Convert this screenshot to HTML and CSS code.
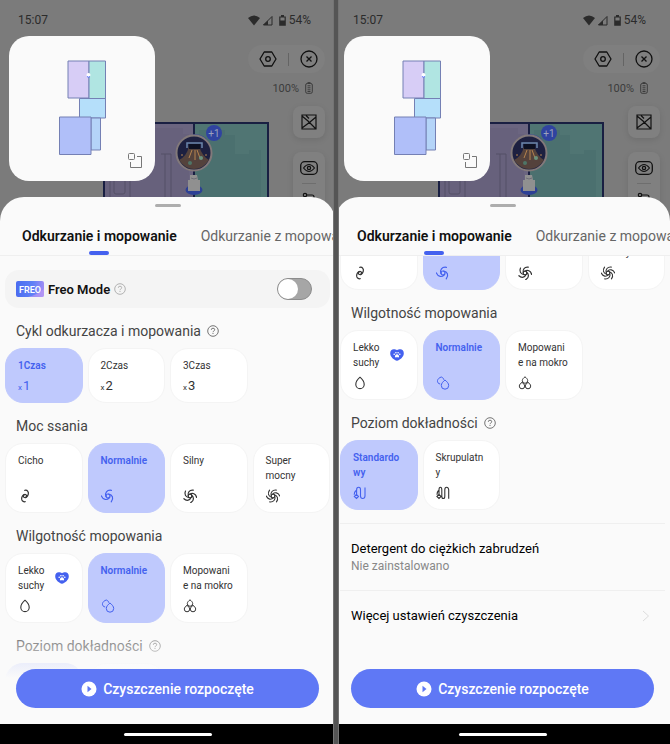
FILE: index.html
```
<!DOCTYPE html>
<html lang="pl">
<head>
<meta charset="UTF-8">
<meta name="viewport" content="width=device-width, initial-scale=1.0">
<title>Freo Mode</title>
<link rel="stylesheet" href="styles.css">
</head>
<body>

<!-- shared icons -->
<svg class="sprite" aria-hidden="true">
<defs>
<symbol id="wifi" viewBox="0 0 12 11"><path fill="currentColor" d="M0 3Q6-2 12 3L6 10.500Z"/></symbol>
<symbol id="signal" viewBox="0 0 11 11"><path fill="none" stroke="currentColor" d="M1.500 10H10V1.500Z"/><path fill="currentColor" d="M6 5.500V10H1Z"/></symbol>
<symbol id="battery" viewBox="0 0 7 11"><path fill="none" stroke="currentColor" stroke-width="1.200" d="M.8 2H6.200V10.200H.8Z"/><path fill="currentColor" d="M2 0H5V2H2ZM1 5.500H6V10H1Z"/></symbol>
<symbol id="charge" viewBox="0 0 8 12"><rect x=".7" y="1.500" width="6.600" height="9.800" rx="1.500" fill="none" stroke="currentColor"/><path stroke="currentColor" d="M2.500 .6H5.500M2.500 3.800H5.500M2.500 5.800H5.500M2.500 7.800H5.500M2.500 9.500H5.500"/></symbol>
<symbol id="hex" viewBox="0 0 18 18"><path fill="none" stroke="currentColor" stroke-width="1.300" stroke-linejoin="round" d="M5.200 2H12.800L17 9L12.800 16H5.200L1 9Z"/><circle cx="9" cy="9" r="2.300" fill="none" stroke="currentColor" stroke-width="1.300"/></symbol>
<symbol id="close" viewBox="0 0 18 18"><circle cx="9" cy="9" r="8" fill="none" stroke="currentColor" stroke-width="1.300"/><path stroke="currentColor" stroke-width="1.300" d="M6.500 6.500L11.500 11.500M11.500 6.500L6.500 11.500"/></symbol>
<symbol id="plan" viewBox="0 0 16 16"><path fill="none" stroke="currentColor" stroke-width="1.200" d="M1 1H15V15H1ZM1 2L7 7L15 15M15 3L9 8L1 14M5 1.500L8 4.500"/></symbol>
<symbol id="eye" viewBox="0 0 18 14"><rect x=".7" y=".7" width="16.600" height="12.600" rx="4" fill="none" stroke="currentColor" stroke-width="1.300"/><path fill="none" stroke="currentColor" stroke-width="1.100" d="M3.500 7Q9 0 14.500 7Q9 14 3.500 7Z"/><circle cx="9" cy="7" r="1.600" fill="none" stroke="currentColor" stroke-width="1.300"/></symbol>
<symbol id="route" viewBox="0 0 14 12"><circle cx="3" cy="3" r="1.700" fill="none" stroke="currentColor" stroke-width="1.200"/><path fill="none" stroke="currentColor" stroke-width="1.200" d="M5 3H10Q12 3 12 5V7Q12 9 10 9H4"/></symbol>
<symbol id="expand" viewBox="0 0 14 15"><rect x=".5" y=".5" width="6" height="6" rx="1" fill="none" stroke="currentColor"/><path fill="none" stroke="currentColor" d="M9 3.500H13.500V14.500H2.500V9"/></symbol>
<symbol id="help" viewBox="0 0 12 12"><circle cx="6" cy="6" r="5.300" fill="none" stroke="currentColor" stroke-width=".9"/><path fill="none" stroke="currentColor" stroke-width=".9" d="M4.300 4.800Q4.300 3.200 6 3.200T7.700 4.700Q7.700 5.500 6.800 6Q6 6.400 6 7.200M6 8V9"/></symbol>
<symbol id="fan2" viewBox="0 0 14 14"><g fill="none" stroke="currentColor" stroke-width="1.200" stroke-linecap="round"><path id="hook" d="M6.800 1.300C9.500 .8 11 3 10.200 5.500C9.500 7.800 7.500 9.300 6 8.300C5 7.500 5.300 6 6.600 5.600"/><use href="#hook" transform="rotate(180 7 7)"/></g></symbol>
<symbol id="fan3" viewBox="0 0 14 14"><g fill="none" stroke="currentColor" stroke-width="1.200" stroke-linecap="round"><path id="arm" d="M5 7.400C3.600 4 5.800 .6 10.400 1.300"/><use href="#arm" transform="rotate(120 7 7)"/><use href="#arm" transform="rotate(240 7 7)"/><circle cx="7" cy="7" r="2"/></g></symbol>
<symbol id="fan5" viewBox="0 0 14 14"><g fill="none" stroke="currentColor" stroke-width="1.200" stroke-linecap="round"><path id="blade" d="M5.200 6.600C4.500 3.600 6.400 .6 10.300 1.200"/><use href="#blade" transform="rotate(72 7 7)"/><use href="#blade" transform="rotate(144 7 7)"/><use href="#blade" transform="rotate(216 7 7)"/><use href="#blade" transform="rotate(288 7 7)"/><circle cx="7" cy="7" r="1.800"/></g></symbol>
<symbol id="fan7" viewBox="0 0 14 14"><g fill="none" stroke="currentColor" stroke-width="1.100" stroke-linecap="round"><path id="vane" d="M5.100 6.400C4.500 3.500 6.300 .7 10.300 1.100"/><use href="#vane" transform="rotate(60 7 7)"/><use href="#vane" transform="rotate(120 7 7)"/><use href="#vane" transform="rotate(180 7 7)"/><use href="#vane" transform="rotate(240 7 7)"/><use href="#vane" transform="rotate(300 7 7)"/><circle cx="7" cy="7" r="1.800"/></g></symbol>
<symbol id="drop1" viewBox="0 0 14 14"><path fill="none" stroke="currentColor" stroke-width="1.100" stroke-linejoin="round" d="M7 1.200C9 2.900 11.200 5.800 11.200 8.400A4.200 4.200 0 0 1 2.800 8.400C2.800 5.800 5 2.900 7 1.200Z"/></symbol>
<symbol id="drop2" viewBox="0 0 14 14"><g fill="none" stroke="currentColor" stroke-linejoin="round"><path d="M9 4C10.700 5.400 12.700 7.300 12.700 9.500A3.700 3.700 0 0 1 5.300 9.500C5.300 7.300 7.300 5.400 9 4Z"/><path d="M4.200 8C2.200 7.800 1.200 6.200 1.500 4.500C1.800 3 3.300 1.600 5.300 1C6.800 1.600 7.700 2.500 7.900 3.800"/></g></symbol>
<symbol id="drop3" viewBox="0 0 14 14"><g fill="none" stroke="currentColor" stroke-linejoin="round"><path id="bead" d="M7 .8C8.300 1.800 9.700 3.200 9.700 4.600A2.700 2.700 0 0 1 4.300 4.600C4.300 3.200 5.700 1.800 7 .8Z"/><use href="#bead" x="-3" y="5.500"/><use href="#bead" x="3" y="5.500"/></g></symbol>
<symbol id="path1" viewBox="0 0 14 14"><path fill="none" stroke="currentColor" stroke-width="1.100" d="M3.600 8.500V4Q3.600 1.200 5.600 1.200T7.500 4V10Q7.500 12.500 9.700 12.500T12 10V1.500M3.500 8.300L5.500 10.400L3.500 12.500L1.300 10.400ZM3 4.500Q1.200 6 1.200 8.800"/></symbol>
<symbol id="path2" viewBox="0 0 14 14"><path fill="none" stroke="currentColor" stroke-width="1.100" d="M3 8.500V3.800Q3 1.200 4.400 1.200T5.800 3.800V10.200Q5.800 12.500 7.300 12.500T8.800 10.200V3.800Q8.800 1.200 10.600 1.200T12.700 3.800V12.800M3 8.300L5 10.400L3 12.500L.9 10.400ZM2.500 4.500Q1 6 1 8.800"/></symbol>
<symbol id="pet" viewBox="0 0 14 12"><path fill="#4461ef" d="M7 11.800C4 11 .2 8 .2 4.200C.2 1.800 1.800 .3 3.700 .3C5 .3 6.200 .6 7 1.300C7.800 .6 9 .3 10.300 .3C12.200 .3 13.800 1.800 13.800 4.200C13.800 8 10 11 7 11.800Z"/><g fill="#fff"><path d="M7 5.200C8.300 5.200 9.500 7 9 8.100C8.500 8.800 7.700 8.200 7 8.200S5.500 8.800 5 8.100C4.500 7 5.700 5.200 7 5.200Z"/><circle cx="4.200" cy="5.200" r=".8"/><circle cx="5.900" cy="3.700" r=".8"/><circle cx="8.100" cy="3.700" r=".8"/><circle cx="9.800" cy="5.200" r=".8"/></g></symbol>
<symbol id="play" viewBox="0 0 16 16"><circle cx="8" cy="8" r="7.500" fill="#fff"/><path fill="#5f78f5" d="M6.500 4.800L10.500 8L6.500 11.200Z"/></symbol>
<symbol id="chevron" viewBox="0 0 8 12"><path fill="none" stroke="currentColor" d="M1 1L6.500 6L1 11"/></symbol>
<symbol id="freo" viewBox="0 0 28 16">
<rect width="28" height="16" rx="2" fill="url(#freoFill)"/>
<path d="M12 16Q21 14 28 8V14Q28 16 26 16Z" fill="#c59cf5" opacity=".6"/>
<text x="3" y="12" font-family="Roboto, sans-serif" font-size="9" fill="#fff">FREO</text>
</symbol>
<linearGradient id="freoFill"><stop offset="0" stop-color="#4a6cf0"/><stop offset=".6" stop-color="#5f80f6"/><stop offset="1" stop-color="#a08cf5"/></linearGradient>

<!-- small floor plan -->
<symbol id="floor" viewBox="0 0 48 96">
<g stroke="#7480b4">
<path fill="#d7cdf6" d="M9 1H30V38H9Z"/>
<path fill="#b0e5e2" d="M30 1H46.500V39H30Z"/>
<path fill="#b5dffa" d="M20.500 38.500H46.500V58H20.500Z"/>
<path fill="#b4d4f8" d="M32 58H41.500V90H32Z"/>
<path fill="#b0bff9" d="M.5 57H32V94.500H.5Z"/>
</g>
<circle cx="29.500" cy="15" r="2" fill="#fff"/><path d="M28 16.500Q29.500 18 31 16.500" fill="none" stroke="#5a78ff"/>
</symbol>

<!-- large floor plan behind the sheet -->
<symbol id="bigfloor" viewBox="0 0 166 100">
<path fill="#6b6580" d="M1 1H91V100H1Z"/>
<path fill="#635d78" d="M1 6H80V12H86V60H91V100H1Z" opacity=".5"/>
<path fill="#507573" d="M91 1H165V100H91Z"/>
<path fill="#4b706f" d="M96 8H122V13H132V32H146V28H158V80H165V100H91V24H96Z"/>
<g fill="none" stroke="#555166"><path d="M7 32V100M27 32V100M58 32H68V78M62 32V100"/><rect x="11" y="56" width="11" height="16" rx="2"/></g>
<path fill="none" stroke="#191f42" stroke-width="2" d="M1 100V1H165V100M91 1V100"/>
<path fill="none" stroke="#31439c" stroke-width="3" d="M90 14Q99 13 104 20"/>
<circle cx="91" cy="31" r="17.500" fill="#1d2040" stroke="#82797a" stroke-width="2"/>
<path fill="#54423c" d="M86 24H96Q99 34 106 38Q100 47 91 47T76 38Q84 34 86 24Z"/>
<path fill="none" stroke="#6c86ac" stroke-width="1.500" d="M84 26V21H99V26"/>
<path fill="#0d1022" d="M86 22H97V27H86Z"/>
<path stroke="#b5834e" d="M89 28L86 36M92 28V38M94 28L97 36M78 33H80M102 33H104"/>
<circle cx="87" cy="41" r="2" fill="#4e7567"/><circle cx="98" cy="36" r="2" fill="#6b927d"/>
<circle cx="111" cy="11" r="8" fill="#3043a0"/>
<text x="111" y="15" text-anchor="middle" font-family="Roboto, sans-serif" font-size="10" fill="#9ba2bd">+1</text>
<ellipse cx="91" cy="68" rx="8.500" ry="5" fill="#2d4095"/>
<path fill="#909090" d="M87 53H94L95 58H97V69H85V58H87Z"/>
<path fill="none" stroke="#6e6e78" d="M88 56Q91 58 94 56"/>
</symbol>
</defs>
</svg>

<main class="screens">

<section class="phone">
<div class="scene">
<div class="status">
<span class="time">15:07</span>
<span class="status-icons">
<svg width="12" height="11"><use href="#wifi"/></svg>
<svg width="11" height="11"><use href="#signal"/></svg>
<svg class="batt" width="7" height="11"><use href="#battery"/></svg>
54%
</span>
</div>
<svg class="bigmap" width="166" height="100"><use href="#bigfloor"/></svg>
<div class="tools">
<div class="pill">
<button class="icon-btn" aria-label="Ustawienia"><svg width="18" height="18"><use href="#hex"/></svg></button>
<span class="sep"></span>
<button class="icon-btn" aria-label="Zamknij"><svg width="18" height="18"><use href="#close"/></svg></button>
</div>
<div class="charge">100% <svg width="8" height="12"><use href="#charge"/></svg></div>
<button class="tool" aria-label="Mapa"><svg width="16" height="16"><use href="#plan"/></svg></button>
<div class="tool tall">
<button class="icon-btn" aria-label="Widok"><svg width="18" height="14"><use href="#eye"/></svg></button>
<span class="line"></span>
<button class="icon-btn" aria-label="Trasa"><svg width="14" height="12"><use href="#route"/></svg></button>
</div>
</div>
<div class="preview">
<svg width="48" height="96"><use href="#floor"/></svg>
<button class="icon-btn expand" aria-label="Powiększ"><svg width="14" height="15"><use href="#expand"/></svg></button>
</div>
</div>

<div class="sheet">
<div class="handle"></div>
<nav class="tabs">
<a class="tab active" href="#">Odkurzanie i mopowanie</a>
<a class="tab" href="#">Odkurzanie z mopowaniem</a>
</nav>
<div class="content">
<div class="freo">
<svg width="28" height="16"><use href="#freo"/></svg>
<label for="freo-mode">Freo Mode</label>
<svg class="help light" width="12" height="12"><use href="#help"/></svg>
<input type="checkbox" id="freo-mode" class="switch">
</div>

<h2>Cykl odkurzacza i mopowania <svg class="help" width="12" height="12"><use href="#help"/></svg></h2>
<div class="options short">
<button class="option selected"><span>1Czas</span><span class="times"><small>x</small>1</span></button>
<button class="option"><span>2Czas</span><span class="times"><small>x</small>2</span></button>
<button class="option"><span>3Czas</span><span class="times"><small>x</small>3</span></button>
</div>

<h2>Moc ssania</h2>
<div class="options">
<button class="option"><span>Cicho</span><svg width="14" height="14"><use href="#fan2"/></svg></button>
<button class="option selected"><span>Normalnie</span><svg width="14" height="14"><use href="#fan3"/></svg></button>
<button class="option"><span>Silny</span><svg width="14" height="14"><use href="#fan5"/></svg></button>
<button class="option"><span>Super<br>mocny</span><svg width="14" height="14"><use href="#fan7"/></svg></button>
</div>

<h2>Wilgotność mopowania</h2>
<div class="options">
<button class="option"><span>Lekko<br>suchy</span><svg width="14" height="14"><use href="#drop1"/></svg><svg class="pet" width="14" height="12"><use href="#pet"/></svg></button>
<button class="option selected"><span>Normalnie</span><svg width="14" height="14"><use href="#drop2"/></svg></button>
<button class="option"><span>Mopowani<br>e na mokro</span><svg width="14" height="14"><use href="#drop3"/></svg></button>
</div>

<h2>Poziom dokładności <svg class="help" width="12" height="12"><use href="#help"/></svg></h2>
<div class="options">
<button class="option selected" aria-label="Standardowy"></button>
<button class="option" aria-label="Skrupulatny"></button>
</div>
</div>
<div class="footer">
<button class="start"><svg width="16" height="16"><use href="#play"/></svg>Czyszczenie rozpoczęte</button>
</div>
</div>
<div class="navbar"><span></span></div>
</section>

<section class="phone">
<div class="scene">
<div class="status">
<span class="time">15:07</span>
<span class="status-icons">
<svg width="12" height="11"><use href="#wifi"/></svg>
<svg width="11" height="11"><use href="#signal"/></svg>
<svg class="batt" width="7" height="11"><use href="#battery"/></svg>
54%
</span>
</div>
<svg class="bigmap" width="166" height="100"><use href="#bigfloor"/></svg>
<div class="tools">
<div class="pill">
<button class="icon-btn" aria-label="Ustawienia"><svg width="18" height="18"><use href="#hex"/></svg></button>
<span class="sep"></span>
<button class="icon-btn" aria-label="Zamknij"><svg width="18" height="18"><use href="#close"/></svg></button>
</div>
<div class="charge">100% <svg width="8" height="12"><use href="#charge"/></svg></div>
<button class="tool" aria-label="Mapa"><svg width="16" height="16"><use href="#plan"/></svg></button>
<div class="tool tall">
<button class="icon-btn" aria-label="Widok"><svg width="18" height="14"><use href="#eye"/></svg></button>
<span class="line"></span>
<button class="icon-btn" aria-label="Trasa"><svg width="14" height="12"><use href="#route"/></svg></button>
</div>
</div>
<div class="preview">
<svg width="48" height="96"><use href="#floor"/></svg>
<button class="icon-btn expand" aria-label="Powiększ"><svg width="14" height="15"><use href="#expand"/></svg></button>
</div>
</div>

<div class="sheet">
<div class="handle"></div>
<nav class="tabs">
<a class="tab active" href="#">Odkurzanie i mopowanie</a>
<a class="tab" href="#">Odkurzanie z mopowaniem</a>
</nav>
<div class="content scrolled">
<div class="options">
<button class="option bottom" aria-label="Cicho"><svg width="14" height="14"><use href="#fan2"/></svg></button>
<button class="option bottom selected" aria-label="Normalnie"><svg width="14" height="14"><use href="#fan3"/></svg></button>
<button class="option bottom" aria-label="Silny"><svg width="14" height="14"><use href="#fan5"/></svg></button>
<button class="option"><span>Super<br>mocny</span><svg width="14" height="14"><use href="#fan7"/></svg></button>
</div>

<h2>Wilgotność mopowania</h2>
<div class="options">
<button class="option"><span>Lekko<br>suchy</span><svg width="14" height="14"><use href="#drop1"/></svg><svg class="pet" width="14" height="12"><use href="#pet"/></svg></button>
<button class="option selected"><span>Normalnie</span><svg width="14" height="14"><use href="#drop2"/></svg></button>
<button class="option"><span>Mopowani<br>e na mokro</span><svg width="14" height="14"><use href="#drop3"/></svg></button>
</div>

<h2>Poziom dokładności <svg class="help" width="12" height="12"><use href="#help"/></svg></h2>
<div class="options">
<button class="option selected"><span>Standardo<br>wy</span><svg width="14" height="14"><use href="#path1"/></svg></button>
<button class="option"><span>Skrupulatn<br>y</span><svg width="14" height="14"><use href="#path2"/></svg></button>
</div>

<div class="rows">
<div class="row">
<div>
<h3>Detergent do ciężkich zabrudzeń</h3>
<p>Nie zainstalowano</p>
</div>
</div>
<a class="row" href="#">
<h3>Więcej ustawień czyszczenia</h3>
<svg width="8" height="12"><use href="#chevron"/></svg>
</a>
</div>
</div>
<div class="footer">
<button class="start"><svg width="16" height="16"><use href="#play"/></svg>Czyszczenie rozpoczęte</button>
</div>
</div>
<div class="navbar"><span></span></div>
</section>

</main>
</body>
</html>
```
FILE: styles.css
```
:root {
    --blue: #4461ef;
    --selected: #bfc9fd;
    --sheet: #fafafa;
    --dim: #7b7b7b;
}

* {
    box-sizing: border-box;
}

body {
    margin: 0;
    font-family: Roboto, sans-serif;
    color: #111;
    background: var(--dim);
}

button {
    font-family: inherit;
    border: 0;
    padding: 0;
    color: inherit;
    background: none;
    cursor: pointer;
}

a {
    color: inherit;
    text-decoration: none;
}

svg {
    display: block;
    flex-shrink: 0;
}

.sprite {
    position: absolute;
    width: 0;
    height: 0;
}

.screens {
    position: relative;
    display: grid;
    grid-template-columns: repeat(2, minmax(0, 1fr));
    height: 100vh;
}

/* line between the two phones */
.screens::after {
    content: "";
    position: absolute;
    top: 0;
    bottom: 0;
    left: 50%;
    width: 4px;
    margin-left: -2px;
    background: #555;
    border: solid #747474;
    border-width: 0 1px;
}

.phone {
    display: flex;
    flex-direction: column;
    min-height: 0;
    overflow: hidden;
}

/* dimmed map screen */
.scene {
    position: relative;
    flex: none;
    height: 221px;
    overflow: hidden;
    background: var(--dim);
}

.status {
    display: flex;
    justify-content: space-between;
    align-items: center;
    height: 40px;
    padding: 0 24px 0 18px;
    font-size: 12px;
    color: #2b2b2b;
}

.status-icons {
    display: flex;
    align-items: center;
    gap: 2px;
}

.status-icons .batt {
    margin: 0 1px 0 4px;
}

.tools {
    display: flex;
    flex-direction: column;
    align-items: flex-end;
    padding: 5px 10px 0 0;
    color: #111;
}

.pill {
    display: flex;
    align-items: center;
    gap: 11px;
    height: 28px;
    padding: 0 7px 0 11px;
    border-radius: 14px;
    background: #7f7f7f;
}

.sep {
    width: 1px;
    height: 13px;
    background: #646464;
}

.charge {
    display: flex;
    align-items: center;
    gap: 6px;
    height: 30px;
    padding-right: 12px;
    font-size: 11px;
    color: #3c3c3c;
}

.tool {
    display: flex;
    flex-direction: column;
    align-items: center;
    justify-content: center;
    width: 32px;
    height: 32px;
    margin: 3px 0 14px;
    border-radius: 8px;
    background: #808080;
    box-shadow: 0 2px 6px rgba(0, 0, 0, 0.1);
}

.tool.tall {
    justify-content: flex-start;
    gap: 8px;
    height: 80px;
    margin: 0;
    padding-top: 9px;
}

.line {
    width: 14px;
    height: 1px;
    background: #6e6e6e;
}

.bigmap {
    position: absolute;
    left: 103px;
    top: 122px;
}

.preview {
    position: absolute;
    left: 9px;
    top: 36px;
    width: 146px;
    height: 145px;
    padding: 24px 0 0 50px;
    border-radius: 20px;
    background: var(--sheet);
}

.expand {
    position: absolute;
    right: 13px;
    bottom: 13px;
    color: #777;
}

/* bottom sheet */
.sheet {
    position: relative;
    display: flex;
    flex-direction: column;
    flex: 1;
    min-height: 0;
    margin-top: -24px;
    border-radius: 24px 24px 0 0;
    background: var(--sheet);
}

.handle {
    flex: none;
    width: 26px;
    height: 3px;
    margin: 7px auto 0;
    border-radius: 2px;
    background: #adadad;
}

.tabs {
    display: flex;
    flex: none;
    gap: 24px;
    height: 49px;
    padding-left: 22px;
    overflow: hidden;
    border-bottom: 1px solid #efefef;
}

.tab {
    display: flex;
    flex-direction: column;
    align-items: center;
    flex: none;
    padding-top: 20px;
    font-size: 14px;
    line-height: 18px;
    color: #666;
}

.tab.active {
    font-weight: 600;
    color: #111;
}

.tab.active::after {
    content: "";
    width: 20px;
    height: 4px;
    margin-top: 6px;
    border-radius: 2px;
    background: var(--blue);
}

.content {
    flex: 1;
    min-height: 0;
    padding: 14px 5px 0;
    overflow: hidden;
}

.content.scrolled {
    display: flex;
    flex-direction: column;
    justify-content: flex-end;
    padding: 0 5px 83px;
}

.freo {
    display: flex;
    align-items: center;
    gap: 4px;
    height: 38px;
    padding: 0 18px 0 11px;
    border-radius: 14px;
    background: #f4f4f4;
    font-size: 13px;
    font-weight: 600;
}

.help {
    color: #666;
}

.help.light {
    color: #aaa;
}

.switch {
    appearance: none;
    width: 35px;
    height: 22px;
    margin: 0 0 0 auto;
    border: 1px solid #8d8d8d;
    border-radius: 11px;
    background: #a6a6a6;
}

.switch::before {
    content: "";
    display: block;
    width: 20px;
    height: 20px;
    border-radius: 50%;
    background: #fff;
}

.switch:checked {
    background: var(--blue);
}

.switch:checked::before {
    margin-left: 13px;
}

h2 {
    display: flex;
    align-items: center;
    flex: none;
    gap: 6px;
    margin: 0;
    padding: 14px 11px 8px;
    font-size: 14px;
    font-weight: 400;
    line-height: 18px;
    color: #444;
}

.options {
    display: grid;
    grid-template-columns: repeat(4, minmax(0, 1fr));
    grid-auto-rows: 70px;
    flex: none;
    gap: 5px;
}

.options.short {
    grid-auto-rows: 55px;
}

.option {
    position: relative;
    display: flex;
    flex-direction: column;
    justify-content: space-between;
    align-items: flex-start;
    padding: 9px 0 9px 12px;
    border: 1px solid #f4f4f4;
    border-radius: 18px;
    background: #fff;
    font-size: 10px;
    line-height: 15px;
    text-align: left;
    white-space: nowrap;
    color: #333;
}

.option.selected {
    border-color: var(--selected);
    background: var(--selected);
    font-weight: 600;
    color: var(--blue);
}

.option.bottom {
    justify-content: flex-end;
}

.short .option {
    padding-bottom: 7px;
}

.times {
    font-size: 13px;
    font-weight: 400;
}

.times small {
    margin-right: 1px;
    font-size: 8px;
}

.pet {
    position: absolute;
    top: 18px;
    right: 13px;
}

.rows {
    flex: none;
    margin-top: 13px;
}

.row {
    display: flex;
    align-items: center;
    justify-content: space-between;
    padding: 16px 15px 16px 11px;
    border-top: 1px solid #efefef;
    color: #ddd;
}

.row h3 {
    margin: 0;
    font-size: 13px;
    font-weight: 400;
    line-height: 18px;
    color: #000;
}

.row p {
    margin: 0;
    font-size: 12px;
    line-height: 16px;
    color: #888;
}

.footer {
    position: absolute;
    left: 0;
    right: 0;
    bottom: 0;
    padding: 39px 16px 16px;
    background: linear-gradient(rgba(250, 250, 250, 0), rgba(250, 250, 250, 0.4) 12px, rgba(250, 250, 250, 0.8) 36px, #fafafa 48px);
}

.start {
    display: flex;
    align-items: center;
    justify-content: center;
    gap: 6px;
    width: 100%;
    height: 39px;
    border-radius: 20px;
    background: #5f78f5;
    font-size: 14px;
    font-weight: 500;
    color: #fff;
}

.navbar {
    display: flex;
    flex: none;
    align-items: center;
    justify-content: center;
    height: 20px;
    background: #000;
}

.navbar span {
    width: 88px;
    height: 3px;
    border-radius: 2px;
    background: #fff;
}
```
